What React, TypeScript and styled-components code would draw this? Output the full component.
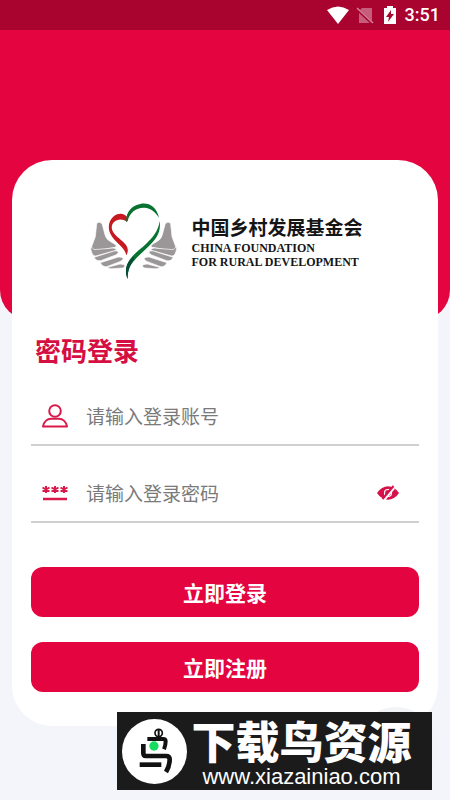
import React, { useState } from "react";
import styled, { createGlobalStyle } from "styled-components";

const RED = "#e4043f";

const GlobalStyle = createGlobalStyle`
  * { box-sizing: border-box; }
  html, body, #root { min-height: 100%; }
  body {
    margin: 0;
    background: #f4f5fa;
    font-family: Roboto, "Noto Sans CJK SC", sans-serif;
  }
`;

const Page = styled.div`
  position: relative;
  min-height: 100vh;
`;

const StatusBar = styled.header`
  display: flex;
  align-items: center;
  justify-content: flex-end;
  height: 30px;
  padding-right: 10px;
  background: #a9032f;
  color: #fff;
`;

const StatusIcons = styled.svg`
  display: block;
  margin-right: 8px;
`;

const Clock = styled.time`
  font: 500 18px/30px Roboto, sans-serif;
`;

const Hero = styled.div`
  height: 290px;
  border-radius: 0 0 30px 30px;
  background: ${RED};
`;

const Card = styled.main`
  margin: -160px 12px 0;
  padding: 35px 19px 34px;
  border-radius: 40px;
  background: #fff;
`;

const Brand = styled.div`
  display: flex;
  justify-content: center;
  gap: 7px;
  height: 90px;
  padding-right: 3px;
`;

const BrandMark = styled.svg`
  flex: none;
`;

const BrandText = styled.div`
  padding-top: 18px;
  color: #151515;
  white-space: nowrap;
`;

const BrandName = styled.div`
  font: 700 19px/28px "Noto Sans CJK SC", sans-serif;
`;

const BrandLatin = styled.div`
  font: 700 12px/14px "Liberation Serif", serif;
`;

const Title = styled.h1`
  margin: 45px 0 0 4px;
  color: #d50e43;
  font: 700 26px/40px "Noto Sans CJK SC", sans-serif;
`;

const Field = styled.label<{ $tall?: boolean }>`
  display: flex;
  align-items: center;
  height: ${(p) => (p.$tall ? 77 : 76)}px;
  padding: ${(p) => (p.$tall ? 18 : 17)}px 20px 0 10px;
  border-bottom: 2px solid #d0d0d0;
`;

const Input = styled.input`
  flex: 1;
  min-width: 0;
  height: 40px;
  margin-left: 17px;
  padding: 0;
  border: 0;
  outline: 0;
  background: transparent;
  color: #333;
  font: 400 19px/28px "Noto Sans CJK SC", sans-serif;
  &::placeholder { color: #7a7a7a; opacity: 1; }
`;

const EyeButton = styled.button`
  display: flex;
  padding: 0;
  border: 0;
  background: none;
  cursor: pointer;
`;

const Actions = styled.div`
  display: grid;
  gap: 25px;
  margin-top: 44px;
`;

const ActionButton = styled.button`
  height: 50px;
  padding: 0;
  border: 0;
  border-radius: 12px;
  background: ${RED};
  color: #fff;
  font: 700 21px/30px "Noto Sans CJK SC", sans-serif;
  cursor: pointer;
`;

const FloatingDisc = styled.div`
  position: absolute;
  right: 12px;
  bottom: 9px;
  width: 84px;
  height: 84px;
  border-radius: 50%;
  background: #f3f4f8;
`;

const Watermark = styled.aside`
  position: absolute;
  right: 18px;
  bottom: 10px;
  display: flex;
  align-items: center;
  gap: 2px;
  width: 315px;
  height: 78px;
  padding-left: 5px;
  background: #1b1b1b;
  color: #fff;
`;

const WatermarkText = styled.div`
  flex: 1;
  padding: 2px 18px 0 0;
  white-space: nowrap;
  text-align: center;
`;

const WatermarkName = styled.div`
  font: 900 44px/50px "Noto Sans CJK SC", sans-serif;
`;

const WatermarkLink = styled.a`
  display: block;
  color: #fff;
  font: 400 22px/24px "Liberation Sans", sans-serif;
  text-decoration: none;
`;

function Logo() {
  const hand = (
    <>
      <path d="M38 87q1-6 8-5 7 0 9 7l8 30q3 14 17 21l16 10q3 5-4 7l-66 13q-8-2-5-10l13-35z" />
      <path d="M20 158q4-4 10 6l58-5q10 1 9 7l-62 17q-12 1-15-25z" />
      <path d="M30 187l60-19q12-3 13 4 0 4-8 8l-45 17q-13 3-20-10z" />
      <path d="M49 203l54-17q12-1 15 5-2 6-11 9l-39 15q-13 1-19-12z" />
      <path d="M71 217l37-10q12 0 15 5-1 6-7 7l-29 2q-11 2-16-4z" />
    </>
  );
  return (
    <BrandMark width="100" height="90" viewBox="0 0 300 270" role="img" aria-label="中国乡村发展基金会">
      <g fill="#9b9798" stroke="#fff" strokeWidth="2">
        {hand}
        <g transform="translate(298 0) scale(-1 1)">{hand}</g>
      </g>
      <path fill="#c51a22" d="M129 80c-13-9-28-9-39 1-9 9-9 22 0 34 11 14 32 26 39 40 4 9 3 17-2 26-2-11-8-19-17-28-13-13-26-24-32-39-7-18-3-39 12-51 16-12 36-6 41 6z" />
      <path fill="#087331" d="M127 82c-2-24 9-43 31-52 27-12 59-2 67 39-9-17-24-30-44-31-24-1-44 14-50 40z" />
      <path fill="#087331" d="M227 78c5 35-12 56-36 79-20 20-48 41-56 66-4 10-4 19-4 29-7-15-7-35 2-51 12-22 35-37 53-54 19-19 37-38 41-69z" />
      <path fill="#0a4c39" d="M131 252c-7-15-7-34 1-48 5-8 11-14 18-20v10c-13 15-19 32-19 58z" />
    </BrandMark>
  );
}

function UserIcon() {
  return (
    <svg width="28" height="24" viewBox="0 0 28 24" fill="none" stroke="#d71a4b" strokeWidth="2" aria-hidden="true">
      <circle cx="14" cy="7" r="5.8" />
      <path d="M2 22.500C3 17.500 6.500 14.800 10 14.800h8c3.500 0 7 2.700 8 7.700z" strokeLinejoin="round" />
    </svg>
  );
}

function PasswordIcon() {
  return (
    <svg width="28" height="24" viewBox="0 0 28 24" stroke="#d71a4b" strokeWidth="2" aria-hidden="true">
      {[5, 14, 23].map((x) => (
        <path key={x} d={`M${x} 5v7M${x - 3.5} 6.500l7 4M${x - 3.5} 10.500l7-4`} />
      ))}
      <path d="M2 18h24" strokeWidth="2.500" />
    </svg>
  );
}

function EyeOffIcon() {
  return (
    <svg width="22" height="18" viewBox="0 0 22 18" aria-hidden="true">
      <path fill="#d7124a" d="M0 9c6-9 16-9 22 0-6 9-16 9-22 0z" />
      <circle cx="11" cy="9" r="3.500" fill="none" stroke="#fff" strokeWidth="1.200" />
      <path d="M7 16L17 4" stroke="#fff" strokeWidth="2.500" />
      <path d="M5.500 15L16.500 2" stroke="#d7124a" strokeWidth="2" />
    </svg>
  );
}

function BirdIcon() {
  return (
    <svg width="65" height="65" viewBox="0 0 195 195" aria-hidden="true">
      <circle cx="97.500" cy="97.500" r="97.500" fill="#fff" />
      <g fill="none" stroke="#111" strokeWidth="14">
        <circle cx="110" cy="42" r="11" strokeWidth="5" />
        <path d="M110 32v20" strokeWidth="6" />
        <path d="M76 60h47q8 0 8 7 0 11-5 24" strokeWidth="12" />
        <path d="M64 75v28q0 8 8 8h60q11 0 11 10 0 20-11 38" />
        <path d="M53 137h65" />
      </g>
      <circle cx="96" cy="81" r="14" fill="#17dc61" />
    </svg>
  );
}

export default function App() {
  const [visible, setVisible] = useState(false);
  return (
    <>
      <GlobalStyle />
      <Page>
        <StatusBar>
          <StatusIcons width="70" height="20" viewBox="0 0 70 20" aria-hidden="true">
            <path fill="#fff" d="M0 5Q11-2 22 5L11 19z" />
            <path fill="#c65e7b" d="M35 3h10v15H32V6z" />
            <path d="M30 4l16 15" stroke="#a9032f" strokeWidth="3" />
            <path d="M30 3l16 15" stroke="#d184a0" strokeWidth="1.500" />
            <path fill="#fff" d="M60 1h6v2h3v16H57V3h3z" />
            <path fill="#a9032f" d="M64 5l-5 7h3l-1 5 6-8h-3z" />
          </StatusIcons>
          <Clock>3:51</Clock>
        </StatusBar>
        <Hero />
        <Card>
          <Brand>
            <Logo />
            <BrandText>
              <BrandName>中国乡村发展基金会</BrandName>
              <BrandLatin>CHINA FOUNDATION</BrandLatin>
              <BrandLatin>FOR RURAL DEVELOPMENT</BrandLatin>
            </BrandText>
          </Brand>
          <Title>密码登录</Title>
          <form onSubmit={(e) => e.preventDefault()}>
            <Field>
              <UserIcon />
              <Input type="text" aria-label="登录账号" placeholder="请输入登录账号" />
            </Field>
            <Field $tall>
              <PasswordIcon />
              <Input type={visible ? "text" : "password"} aria-label="登录密码" placeholder="请输入登录密码" />
              <EyeButton type="button" aria-label="显示密码" onClick={() => setVisible(!visible)}>
                <EyeOffIcon />
              </EyeButton>
            </Field>
            <Actions>
              <ActionButton type="submit">立即登录</ActionButton>
              <ActionButton type="button">立即注册</ActionButton>
            </Actions>
          </form>
        </Card>
        <FloatingDisc />
        <Watermark>
          <BirdIcon />
          <WatermarkText>
            <WatermarkName>下载鸟资源</WatermarkName>
            <WatermarkLink href="#">www.xiazainiao.com</WatermarkLink>
          </WatermarkText>
        </Watermark>
      </Page>
    </>
  );
}
